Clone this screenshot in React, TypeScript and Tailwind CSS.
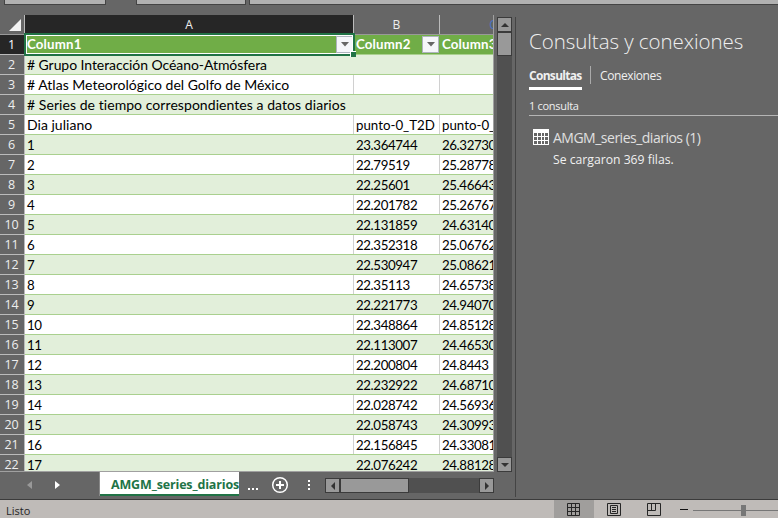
import React from "react";

const rows: [string, string, string][] = [
  ["# Grupo Interacción Océano-Atmósfera", "", ""],
  ["# Atlas Meteorológico del Golfo de México", "", ""],
  ["# Series de tiempo correspondientes a datos diarios", "", ""],
  ["Dia juliano", "punto-0_T2D", "punto-0_T2D"],
  ["1", "23.364744", "26.32730"],
  ["2", "22.79519", "25.28778"],
  ["3", "22.25601", "25.46643"],
  ["4", "22.201782", "25.26767"],
  ["5", "22.131859", "24.63140"],
  ["6", "22.352318", "25.06762"],
  ["7", "22.530947", "25.08621"],
  ["8", "22.35113", "24.65738"],
  ["9", "22.221773", "24.94070"],
  ["10", "22.348864", "24.85128"],
  ["11", "22.113007", "24.46530"],
  ["12", "22.200804", "24.8443"],
  ["13", "22.232922", "24.68710"],
  ["14", "22.028742", "24.56936"],
  ["15", "22.058743", "24.30993"],
  ["16", "22.156845", "24.33081"],
  ["17", "22.076242", "24.88128"],
];

const textSpacing: Record<number, string> = {
  0: "text-[14px] tracking-[-0.07px]",
  1: "text-[14px] tracking-[0.01px]",
  2: "text-[14px] tracking-[0.06px]",
  3: "text-[14px] tracking-[0.02px]",
};

function FilterButton() {
  return (
    <span className="flex h-[17px] w-[17px] shrink-0 items-center justify-center border border-[#aeb3bd] bg-[#f5f6fa]">
      <svg width="8" height="5" viewBox="0 0 8 5"><path d="M0 0h8L4 4.5z" fill="#666" /></svg>
    </span>
  );
}

function ArrowButton({ d, className }: { d: string; className: string }) {
  return (
    <span className={`flex shrink-0 items-center justify-center border border-[#3b3b3b] bg-[#999] ${className}`}>
      <svg width="8" height="8" viewBox="0 0 8 8"><path d={d} fill="#333" /></svg>
    </span>
  );
}

function Sheet() {
  return (
    <div className="h-[457px] w-[494px] shrink-0 overflow-hidden border-r border-b border-[#a0a0a0] font-['Lato',sans-serif] text-[13.3px]">
      <div className="flex h-5 w-[560px] border-b border-[#999] font-['Open_Sans','Noto_Sans',sans-serif] text-[12px] leading-[19px] text-[#eee]">
        <div className="flex w-[25px] shrink-0 items-end justify-end border-r border-[#bbb] pr-[3px] pb-[3px]">
          <svg width="12" height="12" viewBox="0 0 12 12"><path d="M12 0v12H0z" fill="#f2f2f2" /></svg>
        </div>
        <div className="w-[329px] shrink-0 border-r border-[#bbb] bg-[#262626] text-center">A</div>
        <div className="w-[86px] shrink-0 border-r border-[#bbb] text-center">B</div>
        <div className="w-[106px] shrink-0 text-center text-[#4472c4]">C</div>
      </div>
      <div className="relative flex h-5 w-[560px] font-bold text-white">
        <div className="w-[25px] shrink-0 border-r border-b border-[#bbb] bg-[#262626] pr-[1px] text-center font-['Open_Sans',sans-serif] text-[12.5px] leading-5 font-normal">1</div>
        <div className="flex w-[329px] shrink-0 items-center justify-between border-b border-[#a9d08e] bg-[#70ad47] pr-[1px] pl-[2px] tracking-[0.15px]">Column1<FilterButton /></div>
        <div className="flex w-[86px] shrink-0 items-center justify-between border-b border-[#a9d08e] bg-[#70ad47] pr-[1px] pl-[2px] tracking-[0.15px]">Column2<FilterButton /></div>
        <div className="flex w-[106px] shrink-0 items-center border-b border-[#a9d08e] bg-[#70ad47] pl-[2px] tracking-[0.15px]">Column3</div>
        <div className="absolute top-[-2px] left-[24px] h-[23px] w-[331px] border-2 border-[#217346]">
          <div className="h-full w-full border border-white" />
        </div>
        <div className="absolute top-[16px] left-[350px] h-[6px] w-[6px] border-t border-l border-white bg-[#217346]" />
      </div>
      {rows.map((r, i) => {
        const green = i % 2 === 0;
        const grid = green ? "border-r-[#e2efda]" : "border-r-[#d0d0d0]";
        return (
          <div key={i} className="flex h-5 w-[560px] leading-5 whitespace-nowrap text-black">
            <div className="w-[25px] shrink-0 border-r border-b border-[#bbb] bg-[#666] pr-[1px] text-center font-['Open_Sans',sans-serif] text-[12.5px] leading-5 tracking-[-0.1px] text-[#eee]">{i + 2}</div>
            <div className={`flex w-[535px] border-b border-[#a9d08e] ${green ? "bg-[#e2efda]" : "bg-white"}`}>
              <div className={`w-[329px] shrink-0 border-r pl-[2px] leading-5 ${grid} ${textSpacing[i] ?? "tracking-[-0.4px]"}`}>{r[0]}</div>
              <div className={`w-[86px] shrink-0 border-r pl-[2px] ${grid} ${i === 3 ? "tracking-[0px]" : "tracking-[-0.4px]"}`}>{r[1]}</div>
              <div className={`pl-[2px] ${i === 3 ? "tracking-[0px]" : "tracking-[-0.4px]"}`}>{r[2]}</div>
            </div>
          </div>
        );
      })}
    </div>
  );
}

function SheetTabs() {
  return (
    <div className="flex h-[27px] w-[515px] items-start">
      <div className="flex h-[24px] w-[100px] items-center gap-[23px] border-r border-[#888] pt-[1px] pl-[27px]">
        <svg width="5" height="8" viewBox="0 0 5 8"><path d="M5 0v8L0 4z" fill="#999" /></svg>
        <svg width="5" height="8" viewBox="0 0 5 8"><path d="M0 0v8l5-4z" fill="#fff" /></svg>
      </div>
      <div className="h-[24px] w-[139px] overflow-hidden border-b-2 border-[#217346] bg-white pl-[11px] font-['Open_Sans',sans-serif] text-[12.5px] leading-[25px] font-bold tracking-[-0.15px] whitespace-nowrap text-[#217346]">AMGM_series_diarios</div>
      <div className="flex h-[24px] w-[32px] items-center gap-[2px] pt-[9px] pl-[9px]">
        <i className="h-[2px] w-[2px] bg-white" /><i className="h-[2px] w-[2px] bg-white" /><i className="h-[2px] w-[2px] bg-white" />
      </div>
      <svg className="mt-[4px]" width="18" height="18" viewBox="0 0 18 18" fill="none" stroke="#fff"><circle cx="9" cy="9" r="7.3" strokeWidth="1.5" /><path d="M9 5v8M5 9h8" strokeWidth="2" /></svg>
      <div className="ml-[19px] flex flex-col gap-[2px] pt-[8px]">
        <i className="h-[2px] w-[2px] bg-white" /><i className="h-[2px] w-[2px] bg-white" /><i className="h-[2px] w-[2px] bg-white" />
      </div>
      <div className="mt-[6px] ml-[15px] flex h-[15px] w-[169px] bg-[#505050]">
        <ArrowButton d="M6 0v8L2 4z" className="w-[15px]" />
        <div className="w-[69px] border border-[#3b3b3b] bg-[#999]" />
        <div className="flex-1" />
        <ArrowButton d="M2 0v8l4-4z" className="w-[15px]" />
      </div>
    </div>
  );
}

function Panel() {
  return (
    <div className="flex min-w-0 flex-1 flex-col pl-[13px] font-['Open_Sans','Noto_Sans',sans-serif] text-[#f0f0f0]">
      <h1 className="mt-[21px] h-[31px] text-[20.5px] leading-[30px] font-light tracking-[-0.05px] whitespace-nowrap">Consultas y conexiones</h1>
      <div className="mt-[9px] flex h-[24px]">
        <div className="w-[53px] border-b-[3px] border-white text-[12px] leading-[20px] font-bold tracking-[-0.7px] whitespace-nowrap">Consultas</div>
        <div className="ml-[8px] h-[18px] w-px bg-[#aaa]" />
        <div className="ml-[9px] text-[12px] leading-[20px] tracking-[-0.4px]">Conexiones</div>
      </div>
      <div className="mt-[6px] h-[20px] border-b border-[#b5b5b5] text-[11px] leading-[20px] tracking-[-0.3px]">1 consulta</div>
      <div className="mt-[13px] flex pl-[4px]">
        <svg width="16" height="16" viewBox="0 0 16 16"><path d="M0 0h16v16H0z" fill="#fff" /><path d="M1 4h3v3H1zM5 4h3v3H5zM9 4h2v3H9zM12 4h3v3h-3zM1 8h3v3H1zM5 8h3v3H5zM9 8h2v3H9zM12 8h3v3h-3zM1 12h3v3H1zM5 12h3v3H5zM9 12h2v3H9zM12 12h3v3h-3z" fill="#666" /></svg>
        <div className="ml-[4px] whitespace-nowrap">
          <div className="h-[20px] text-[14px] leading-[18px] font-normal tracking-[-0.5px] text-[#e0e0e0]">AMGM_series_diarios (1)</div>
          <div className="text-[12.2px] leading-[22px]">Se cargaron 369 filas.</div>
        </div>
      </div>
    </div>
  );
}

export default function App() {
  return (
    <div className="flex h-[518px] w-[778px] flex-col overflow-hidden bg-[#666]">
      <div className="flex h-[5px] shrink-0">
        <div className="ml-[4px] w-[102px] border border-t-0 border-[#444] bg-[#b1b1b1]" />
        <div className="ml-[30px] w-[110px] border border-t-0 border-[#444] bg-[#b1b1b1]" />
        <div className="ml-[3px] flex-1 border border-t-0 border-r-0 border-[#444] bg-[#b1b1b1]" />
      </div>
      <div className="flex h-[494px] shrink-0">
        <div className="flex w-[515px] shrink-0 flex-col pt-[10px]">
          <div className="flex">
            <Sheet />
            <div className="mt-[2px] ml-[3px] flex h-[455px] w-[15px] flex-col bg-[#505050]">
              <ArrowButton d="M0 6h8L4 2z" className="h-[15px]" />
              <div className="h-[24px] border border-[#3b3b3b] bg-[#999]" />
              <div className="flex-1" />
              <ArrowButton d="M0 2h8L4 6z" className="h-[15px]" />
            </div>
          </div>
          <SheetTabs />
        </div>
        <div className="mt-[12px] mb-[2px] w-px bg-[#444]" />
        <Panel />
      </div>
      <div className="flex h-[19px] shrink-0 border-t border-[#3b3b3b] bg-[#bfbbb8]">
        <div className="w-[554px] pl-[6px] font-['Open_Sans','Noto_Sans',sans-serif] text-[11px] leading-[22px] text-[#262626]">Listo</div>
        <div className="flex w-10 bg-[#a09e9c] pt-[3px] pl-[13px]">
          <svg width="13" height="13" viewBox="0 0 13 13" fill="none" stroke="#262626"><path d="M.5.5h12v12H.5zM4.5 0v13M8.5 0v13M0 4.5h13M0 8.5h13" /></svg>
        </div>
        <div className="w-10 pt-[3px] pl-[13px]">
          <svg width="14" height="13" viewBox="0 0 14 13" fill="none" stroke="#262626"><path d="M.5.5h13v12H.5zM3.5 2.5h7v8h-7zM5 4.5h4M5 6.5h4M5 8.5h4" /></svg>
        </div>
        <div className="w-10 pt-[3px] pl-[13px]">
          <svg width="14" height="13" viewBox="0 0 14 13" fill="none" stroke="#262626"><path d="M.5.5h13v12H.5zM4.5 0v7M8.5 0v7.5H0" /></svg>
        </div>
        <svg width="104" height="18" viewBox="0 0 104 18"><path d="M6 9h8v1H6z" fill="#111" /><path d="M19 10h85v1H19z" fill="#777" /><path d="M67 5h5v11h-5z" fill="#777" /></svg>
      </div>
    </div>
  );
}
